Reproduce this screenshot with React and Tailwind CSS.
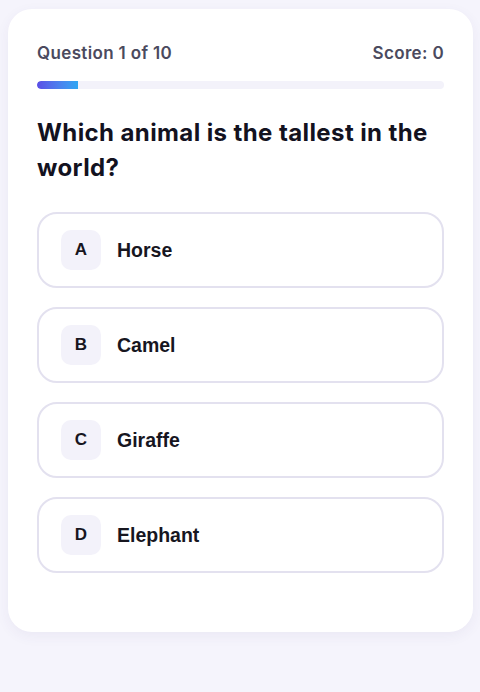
import { useState } from 'react'

const options = [
    { letter: 'A', label: 'Horse' },
    { letter: 'B', label: 'Camel' },
    { letter: 'C', label: 'Giraffe' },
    { letter: 'D', label: 'Elephant' },
]

const OptionButton = ({ letter, label, onPick }) => {
    return (
        <button
            className="flex items-center gap-4 w-full h-[76px] px-[22px] border-2 border-[#e3e1ef] rounded-[20px] bg-white text-left cursor-pointer hover:border-[#c9c5e6]"
            onClick={onPick}
        >
            <span className="flex items-center justify-center w-10 h-10 rounded-[10px] bg-[#f3f2fa] text-[17px] font-bold text-[#17161f] font-['Liberation_Sans',Arial,sans-serif]">
                {letter}
            </span>
            <span className="pt-px text-[19.5px] font-bold text-[#17161f] font-['Liberation_Sans',Arial,sans-serif]">
                {label}
            </span>
        </button>
    )
}

export default function App() {
    const [picked, setPicked] = useState(null)
    const current = 1
    const total = 10

    return (
        <div className="min-h-[692px] bg-[#f5f4fc] pt-[9px] pl-2 font-['Inter','Noto_Sans',sans-serif]">
            <div className="w-[465px] bg-white rounded-[24px] shadow-[0_4px_14px_rgba(60,50,120,0.06)] px-[29px] pt-[33px] pb-[59px]">
                {/* Header */}
                <div className="flex items-center justify-between h-6 text-[17px] font-semibold text-[#4b4a5e] tracking-[0.35px]">
                    <span>Question {current} of {total}</span>
                    <span>Score: 0</span>
                </div>

                {/* Progress */}
                <div className="mt-[15px] h-2 w-full rounded-full bg-[#f3f2fa] overflow-hidden">
                    <div
                        className="h-full rounded-l-full bg-gradient-to-r from-[#5a4de6] to-[#2ca6f3]"
                        style={{ width: `${(current / total) * 100}%` }}
                    />
                </div>

                {/* Question */}
                <h2 className="mt-[26px] text-[24px] leading-[35px] font-bold text-[#13121f] tracking-[0.4px]">
                    Which animal is the tallest in the world?
                </h2>

                {/* Options */}
                <div className="mt-[27px] flex flex-col gap-[19px]">
                    {options.map((o) => (
                        <OptionButton
                            key={o.letter}
                            letter={o.letter}
                            label={o.label}
                            onPick={() => setPicked(o.letter)}
                        />
                    ))}
                </div>
            </div>
        </div>
    )
}
